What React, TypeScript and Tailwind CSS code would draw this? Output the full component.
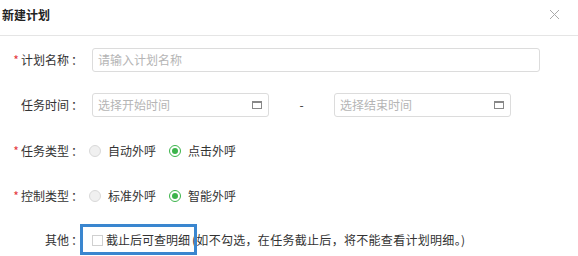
import React from "react";

const font = { fontFamily: '"Noto Sans CJK SC", "Liberation Sans", sans-serif' };

function Label({ text, required }: { text: string; required?: boolean }) {
  return (
    <div className="w-[83px] shrink-0 text-right text-[12px] text-[#333] whitespace-nowrap">
      {required && <span className="mr-[2px] text-[#e4393c]">*</span>}
      {text}
      <span className="ml-[2px]">：</span>
    </div>
  );
}

function Radio({ checked, label }: { checked?: boolean; label: string }) {
  return (
    <label className="flex items-center gap-[7px] text-[12px] text-[#333]">
      {checked ? (
        <span className="flex h-[12px] w-[12px] items-center justify-center rounded-full border border-[#3cb44b] bg-white">
          <span className="h-[6px] w-[6px] rounded-full bg-[#3cb44b]" />
        </span>
      ) : (
        <span className="h-[12px] w-[12px] rounded-full border border-[#d9d9d9] bg-[#f0f0f0]" />
      )}
      {label}
    </label>
  );
}

function DateInput({ placeholder }: { placeholder: string }) {
  return (
    <div className="flex h-[24px] w-[177px] items-center justify-between rounded-[3px] border border-[#dcdcdc] pl-[5px] pr-[6px] text-[12px] text-[#b5b5b5]">
      <span>{placeholder}</span>
      <span className="h-[8px] w-[10px] border border-[#888] border-t-2" />
    </div>
  );
}

export default function App() {
  return (
    <div className="h-[256px] w-[578px] overflow-hidden bg-white" style={font}>
      {/* header */}
      <div className="flex h-[36px] items-center justify-between border-b border-[#e5e5e5] pl-[2px] pr-[18px] pb-[6px]">
        <span className="text-[12px] font-bold text-[#222]">新建计划</span>
        <svg width="11" height="11" viewBox="0 0 11 11" className="text-[#aaa]">
          <path d="M1 1L10 10M10 1L1 10" stroke="currentColor" strokeWidth="1" />
        </svg>
      </div>

      <div className="pt-[12px]">
        <div className="flex h-[24px] items-center">
          <Label text="计划名称" required />
          <div className="ml-[9px] flex h-[24px] w-[448px] items-center rounded-[3px] border border-[#dcdcdc] px-[5px] text-[12px] text-[#b5b5b5]">
            请输入计划名称
          </div>
        </div>

        <div className="mt-[21px] flex h-[24px] items-center">
          <Label text="任务时间" />
          <div className="ml-[9px] flex items-center">
            <DateInput placeholder="选择开始时间" />
            <span className="w-[65px] text-center text-[12px] text-[#333]">-</span>
            <DateInput placeholder="选择结束时间" />
          </div>
        </div>

        <div className="mt-[22px] flex h-[24px] items-center">
          <Label text="任务类型" required />
          <div className="ml-[6px] flex items-center gap-[13px]">
            <Radio label="自动外呼" />
            <Radio label="点击外呼" checked />
          </div>
        </div>

        <div className="mt-[21px] flex h-[24px] items-center">
          <Label text="控制类型" required />
          <div className="ml-[6px] flex items-center gap-[13px]">
            <Radio label="标准外呼" />
            <Radio label="智能外呼" checked />
          </div>
        </div>

        <div className="mt-[20px] flex h-[24px] items-center">
          <Label text="其他" />
          <div className="relative ml-[9px] flex items-center text-[12px] text-[#333]">
            <span className="mr-[3px] h-[11px] w-[11px] border border-[#d0d0d0] bg-white" />
            <span>截止后可查明细</span>
            <span className="ml-[2px] tracking-[0.3px]">(如不勾选，在任务截止后，将不能查看计划明细。)</span>
            <div className="pointer-events-none absolute left-[-12px] top-[-7px] h-[31px] w-[117px] border-[3px] border-[#3a86cf]" />
          </div>
        </div>
      </div>
    </div>
  );
}
